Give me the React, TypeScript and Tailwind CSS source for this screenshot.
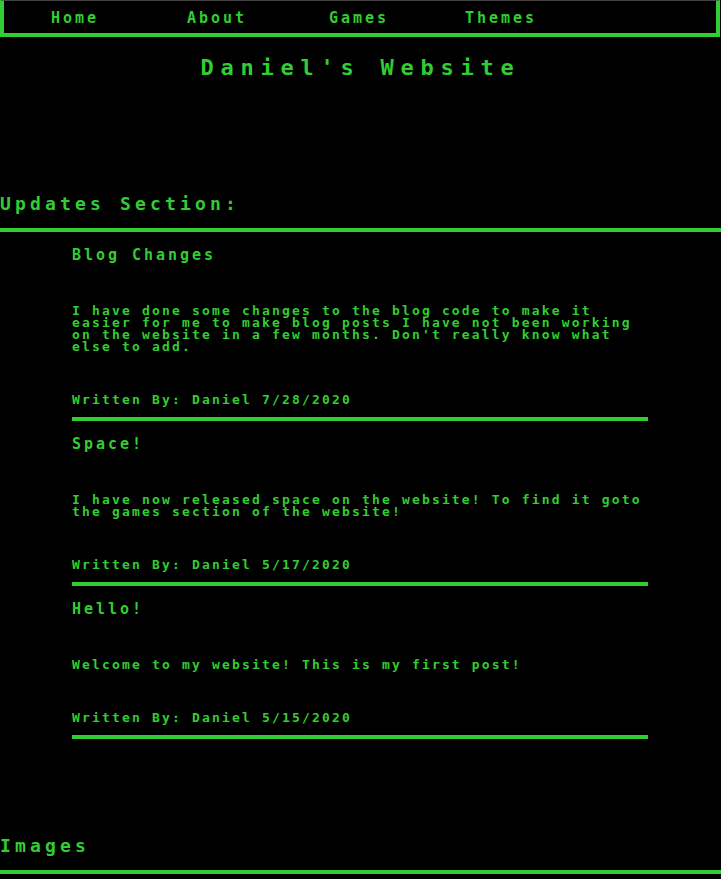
const navItems = ['Home', 'About', 'Games', 'Themes'];

const posts = [
  {
    title: 'Blog Changes',
    body: "I have done some changes to the blog code to make it easier for me to make blog posts I have not been working on the website in a few months. Don't really know what else to add.",
    date: '7/28/2020',
  },
  {
    title: 'Space!',
    body: 'I have now released space on the website! To find it goto the games section of the website!',
    date: '5/17/2020',
  },
  {
    title: 'Hello!',
    body: 'Welcome to my website! This is my first post!',
    date: '5/15/2020',
  },
];

const App: React.FC = () => {
  return (
    <div className="min-h-[879px] bg-black text-[#32cd32] font-['DejaVu_Sans_Mono',monospace] font-bold">
      {/* nav bar */}
      <nav className="w-[720px] h-[37px] pt-[2px] border-t border-t-[#444] border-l-4 border-r-4 border-b-4 border-[#32cd32] flex items-center">
        {navItems.map((item) => (
          <div key={item} className="w-[142px] text-center text-[15px] leading-[14px] tracking-[2.97px]">
            {item}
          </div>
        ))}
      </nav>

      <h1 className="mt-[20px] text-center text-[22px] leading-[22px] tracking-[6.76px]">Daniel's Website</h1>

      <h2 className="mt-[116px] text-[18px] leading-[18px] tracking-[4.16px]">Updates Section:</h2>
      <div className="mt-[15px] h-[4px] bg-[#32cd32]" />

      <div className="ml-[72px] w-[576px]">
        {posts.map((post) => (
          <div key={post.date} className="pt-[16px]">
            <h3 className="text-[15px] leading-[14px] tracking-[2.97px]">{post.title}</h3>
            <p className="mt-[43px] text-[13px] leading-[12px] tracking-[2.17px]">{post.body}</p>
            <h4 className="mt-[40px] text-[13px] leading-[13px] tracking-[2.17px]">Written By: Daniel {post.date}</h4>
            <div className="mt-[11px] h-[4px] bg-[#32cd32]" />
          </div>
        ))}
      </div>

      <h2 className="mt-[98px] text-[18px] leading-[18px] tracking-[4.16px]">Images</h2>
      <div className="mt-[15px] h-[4px] bg-[#32cd32]" />
    </div>
  );
};

export default App;
